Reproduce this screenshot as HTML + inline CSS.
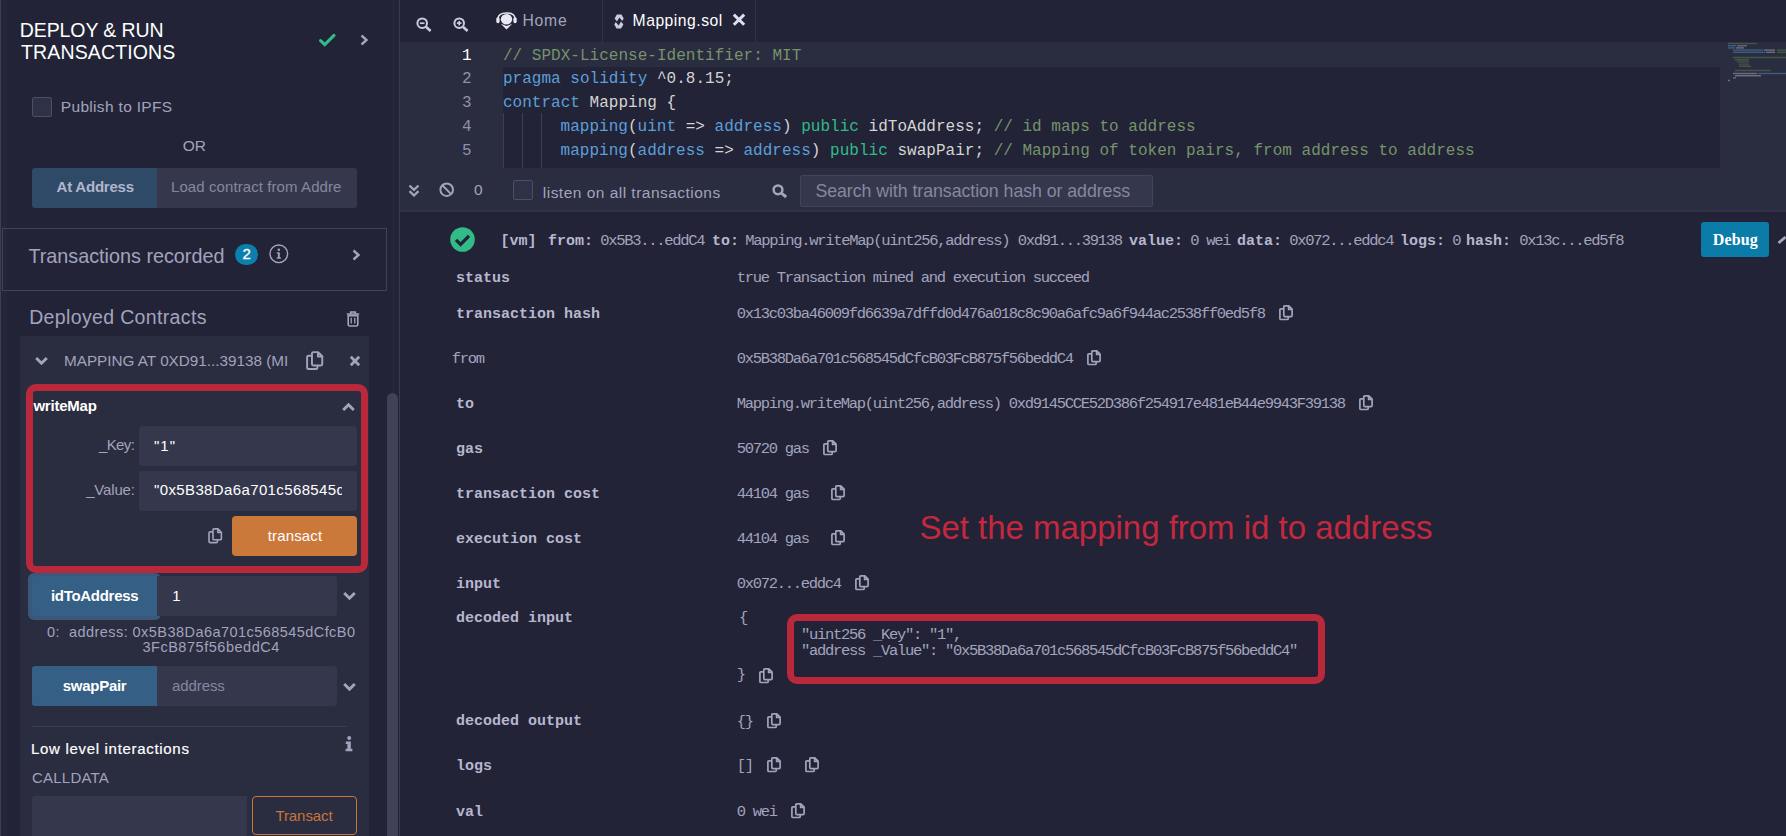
<!DOCTYPE html>
<html lang="en">
<head>
<meta charset="utf-8">
<title>Remix - Deploy &amp; Run Transactions</title>
<style>
*{box-sizing:border-box;margin:0;padding:0}
html,body{width:1786px;height:836px;overflow:hidden;background:#222336}
body{position:relative;font-family:"Liberation Sans",sans-serif;color:#a2a3bd;font-size:15px}
.a{position:absolute}
.t{position:absolute;white-space:nowrap}
.code{font-family:"Liberation Mono",monospace;font-size:16px;line-height:24px;white-space:pre;letter-spacing:0.020px}
.tb{font-family:"Liberation Mono",monospace;font-weight:bold;font-size:15px;line-height:20px;color:#b6b7ce;letter-spacing:-0.002px;white-space:pre}
.tv{font-family:"Liberation Mono",monospace;font-size:15.5px;line-height:20px;color:#a2a3bd;letter-spacing:-1.302px;white-space:pre}
svg{position:absolute;overflow:visible}
</style>
</head>
<body>
<!-- ================= SIDE PANEL ================= -->
<div class="a" style="left:0;top:0;width:1px;height:836px;background:#3d3f56"></div>
<div class="a" style="left:1px;top:0;width:5.500px;height:836px;background:#25263b"></div>

<svg style="left:318px;top:32px" width="18" height="16" viewBox="0 0 18 16"><path d="M2.600 8.600 L6.800 12.600 L16 3.400" fill="none" stroke="#32ba89" stroke-width="3.200" stroke-linecap="round"/></svg>
<svg style="left:359px;top:34px" width="10" height="12" viewBox="0 0 10 12"><path d="M2.500 1.500 L7.500 6 L2.500 10.500" fill="none" stroke="#a2a3bd" stroke-width="2.400"/></svg>

<div class="a" style="left:32px;top:97px;width:20px;height:20px;background:#2f3147;border:1px solid #4c4f66;border-radius:2px"></div>

<div class="a" style="left:32px;top:168px;width:125px;height:40px;background:#2e4a67;border-radius:3px 0 0 3px"></div>
<div class="a" style="left:157px;top:168px;width:200px;height:40px;background:#35384c;border-radius:0 3px 3px 0"></div>

<div class="a" style="left:2px;top:228px;width:385px;height:63px;border:1px solid #40435a"></div>
<div class="a" style="left:235px;top:244px;width:23px;height:21px;border-radius:10.5px;background:#0d7fac"></div>
<svg style="left:269px;top:244px" width="20" height="20" viewBox="0 0 20 20"><circle cx="9.800" cy="9.800" r="8.800" fill="none" stroke="#a2a3bd" stroke-width="1.400"/><rect x="8.900" y="8.400" width="1.900" height="6" fill="#a2a3bd"/><rect x="7.700" y="8.400" width="2.200" height="1.200" fill="#a2a3bd"/><rect x="7.500" y="13.400" width="4.600" height="1.200" fill="#a2a3bd"/><circle cx="9.800" cy="5.700" r="1.250" fill="#a2a3bd"/></svg>
<svg style="left:351.100px;top:249.200px" width="10" height="12" viewBox="0 0 10 12"><path d="M2.500 1.500 L7.500 6 L2.500 10.500" fill="none" stroke="#a2a3bd" stroke-width="2.400"/></svg>

<svg style="left:346.400px;top:310.800px" width="14" height="16" viewBox="0 0 14 16"><path d="M0.800 3 H13.200 M4.700 2.800 V1 H9.300 V2.800" fill="none" stroke="#a2a3bd" stroke-width="1.600"/><path d="M2.200 4.600 H11.800 V13.400 Q11.800 15 10.200 15 H3.800 Q2.200 15 2.200 13.400 Z" fill="none" stroke="#a2a3bd" stroke-width="1.600"/><path d="M5.200 6.800 V12.600 M8.800 6.800 V12.600" stroke="#a2a3bd" stroke-width="1.300"/></svg>

<!-- instance -->
<div class="a" style="left:20px;top:336px;width:349px;height:500px;background:#2a2c3f"></div>
<svg style="left:35.400px;top:356px" width="13" height="10" viewBox="0 0 13 10"><path d="M1.200 2 L6.500 7.200 L11.800 2" fill="none" stroke="#a2a3bd" stroke-width="3"/></svg>
<svg style="left:305.6px;top:351.4px" width="17.4" height="19.2" viewBox="0 0 14 15.400"><path d="M4.800 3.600 V2 Q4.800 0.900 5.900 0.900 H9.800 L13.100 4.200 V10.500 Q13.100 11.600 12 11.600 H5.900 Q4.800 11.600 4.800 10.500 Z M9.600 1.100 V4.400 H12.900" fill="none" stroke="#a2a3bd" stroke-width="1.55" stroke-linejoin="round"/><path d="M4.600 3.800 H2 Q0.900 3.800 0.900 4.900 V13.400 Q0.900 14.500 2 14.500 H8.100 Q9.200 14.500 9.200 13.400 V11.800" fill="none" stroke="#a2a3bd" stroke-width="1.55"/></svg>
<svg style="left:348.500px;top:355.200px" width="12" height="12" viewBox="0 0 12 12"><path d="M1.800 1.800 L10.200 10.200 M10.200 1.800 L1.800 10.200" stroke="#a2a3bd" stroke-width="2.800"/></svg>

<svg style="left:342px;top:402px" width="13" height="10" viewBox="0 0 13 10"><path d="M1.200 8 L6.500 2.800 L11.800 8" fill="none" stroke="#a2a3bd" stroke-width="3"/></svg>

<div class="a" style="left:139px;top:426px;width:218px;height:40px;background:#35384c;border-radius:3px"></div>
<div class="a" style="left:139px;top:471px;width:218px;height:40px;background:#35384c;border-radius:3px"></div>
<svg style="left:207.8px;top:528.2px" width="14.4" height="15.6" viewBox="0 0 14 15.400"><path d="M4.800 3.600 V2 Q4.800 0.900 5.900 0.900 H9.800 L13.100 4.200 V10.500 Q13.100 11.600 12 11.600 H5.900 Q4.800 11.600 4.800 10.500 Z M9.600 1.100 V4.400 H12.900" fill="none" stroke="#a2a3bd" stroke-width="1.6" stroke-linejoin="round"/><path d="M4.600 3.800 H2 Q0.900 3.800 0.900 4.900 V13.400 Q0.900 14.500 2 14.500 H8.100 Q9.200 14.500 9.200 13.400 V11.800" fill="none" stroke="#a2a3bd" stroke-width="1.6"/></svg>
<div class="a" style="left:232px;top:516px;width:125px;height:40px;background:#cb793b;border-radius:4px"></div>

<div class="a" style="left:28px;top:573px;width:133px;height:47px;background:#39587a;border-radius:6px"></div>
<div class="a" style="left:32px;top:576px;width:125px;height:40px;background:#355f85;border-radius:3px 0 0 3px"></div>
<div class="a" style="left:157px;top:576px;width:180px;height:40px;background:#35384c;border-radius:0 3px 3px 0"></div>
<svg style="left:343.400px;top:591.200px" width="13" height="10" viewBox="0 0 13 10"><path d="M1.200 2 L6.500 7.200 L11.800 2" fill="none" stroke="#a2a3bd" stroke-width="3"/></svg>

<div class="a" style="left:32px;top:666px;width:125px;height:40px;background:#355f85;border-radius:3px 0 0 3px"></div>
<div class="a" style="left:157px;top:666px;width:180px;height:40px;background:#35384c;border-radius:0 3px 3px 0"></div>
<svg style="left:343.400px;top:681.600px" width="13" height="10" viewBox="0 0 13 10"><path d="M1.200 2 L6.500 7.200 L11.800 2" fill="none" stroke="#a2a3bd" stroke-width="3"/></svg>

<div class="a" style="left:32px;top:726px;width:315px;height:1px;background:#393c52"></div>
<svg style="left:344.500px;top:736.400px" width="8" height="15.500" viewBox="0 0 8 15.500"><circle cx="4.200" cy="2" r="2" fill="#a2a3bd"/><path d="M0.800 5.600 H5.800 V12.800 H7.400 V15.300 H0.600 V12.800 H2.400 V8 H0.800 Z" fill="#a2a3bd"/></svg>
<div class="a" style="left:32px;top:796px;width:215px;height:40px;background:#35384c;border-radius:3px 0 0 0"></div>
<div class="a" style="left:252px;top:796px;width:105px;height:39px;border:1px solid #c97539;border-radius:4px"></div>

<!-- scrollbar + drag bar -->
<div class="a" style="left:393px;top:0;width:1px;height:394px;background:#2b2d42"></div>
<div class="a" style="left:386.500px;top:393px;width:11px;height:450px;background:#404258;border-radius:5.500px"></div>
<div class="a" style="left:399px;top:0;width:1px;height:836px;background:#393b52"></div>

<!-- ================= MAIN PANEL ================= -->
<!-- tab bar -->
<svg style="left:415.500px;top:17px" width="16" height="15" viewBox="0 0 16 15"><circle cx="6.200" cy="6.200" r="4.800" fill="none" stroke="#c9cbe0" stroke-width="2"/><path d="M9.900 9.700 L14.600 14" stroke="#c9cbe0" stroke-width="2.600"/><path d="M3.900 6.200 H8.500" stroke="#c9cbe0" stroke-width="1.700"/></svg>
<svg style="left:452.800px;top:17px" width="16" height="15" viewBox="0 0 16 15"><circle cx="6.200" cy="6.200" r="4.800" fill="none" stroke="#c9cbe0" stroke-width="2"/><path d="M9.900 9.700 L14.600 14" stroke="#c9cbe0" stroke-width="2.600"/><path d="M3.900 6.200 H8.500 M6.200 3.900 V8.500" stroke="#c9cbe0" stroke-width="1.700"/></svg>
<svg style="left:495.600px;top:12px" width="21" height="18" viewBox="0 0 21 18"><path d="M2 9 V7 Q2 1 10.500 1 Q19 1 19 7 V9" fill="none" stroke="#e8e9f3" stroke-width="1.500"/><rect x="0.300" y="5.200" width="3.300" height="6" rx="1.600" fill="#e8e9f3"/><rect x="17.400" y="5.200" width="3.300" height="6" rx="1.600" fill="#e8e9f3"/><ellipse cx="10.500" cy="7.300" rx="5.700" ry="5.300" fill="#e8e9f3"/><path d="M4.800 11.800 L10.500 17.600 L16.200 11.800 L10.500 14 Z" fill="#e8e9f3"/></svg>
<div class="a" style="left:602px;top:0;width:1px;height:42px;background:#303247"></div>
<div class="a" style="left:755px;top:0;width:1px;height:42px;background:#303247"></div>
<svg style="left:614px;top:13.800px" width="10" height="15" viewBox="0 0 10 15"><path d="M0.600 4.600 L2.900 0.600 H7.500 L9.700 4.400 L8.300 6.900 L5.300 3.500 L3 7.600 Z M9.400 10.400 L7.100 14.400 H2.500 L0.300 10.600 L1.700 8.100 L4.700 11.500 L7 7.400 Z" fill="#c9cbe0"/></svg>
<svg style="left:731.500px;top:13px" width="14" height="13.400" viewBox="0 0 14 13.400"><path d="M1.800 1.600 L12.200 11.800 M12.200 1.600 L1.800 11.800" stroke="#dcdded" stroke-width="3"/></svg>

<!-- editor -->
<div class="a" style="left:400px;top:42px;width:1386px;height:126px;background:#2a2c3f"></div>
<div class="a" style="left:503px;top:67px;width:1217px;height:101px;background:#222336"></div>
<div class="a" style="left:503px;top:113px;width:1px;height:55px;background:#3c3f54"></div>
<div class="a" style="left:522px;top:113px;width:1px;height:55px;background:#3c3f54"></div>
<div class="a" style="left:541px;top:113px;width:1px;height:55px;background:#3c3f54"></div>
<!-- minimap -->
<svg style="left:1727px;top:42px" width="59" height="42" viewBox="0 0 59 42"><g stroke-width="1.400" fill="none" opacity="0.600"><path d="M1 1.500 H30" stroke="#55734a"/><path d="M1 3.700 H9" stroke="#4b7fae"/><path d="M10 3.700 H20" stroke="#8f91a8"/><path d="M1 5.900 H8" stroke="#4b7fae"/><path d="M9 5.900 H17" stroke="#9c9eb5"/><path d="M6 8.100 H36" stroke="#4b7fae"/><path d="M37 8.100 H48" stroke="#9c9eb5"/><path d="M50 8.100 H59" stroke="#55734a"/><path d="M6 10.300 H38" stroke="#4b7fae"/><path d="M39 10.300 H48" stroke="#9c9eb5"/><path d="M50 10.300 H59" stroke="#55734a"/><path d="M6 15.500 H59" stroke="#55734a"/><path d="M8 17.700 H22 M10 19.900 H22 M12 22.100 H22 M12 24.300 H24" stroke="#55734a"/><path d="M8 28.500 H44" stroke="#55734a"/><path d="M6 31.500 H30" stroke="#9c9eb5"/><path d="M31 31.500 H59" stroke="#4b7fae"/><path d="M8 33.700 H34" stroke="#9c9eb5"/><path d="M6 35.900 H9 M1 38.500 H3" stroke="#9c9eb5"/></g></svg>

<!-- terminal toolbar -->
<div class="a" style="left:400px;top:168px;width:1386px;height:41px;background:#2a2c3f"></div>
<div class="a" style="left:400px;top:209px;width:1386px;height:3px;background:#2e3046"></div>
<svg style="left:408.400px;top:183.600px" width="12" height="13" viewBox="0 0 12 13"><path d="M1.500 1.500 L6 5.800 L10.500 1.500 M1.500 7.200 L6 11.500 L10.500 7.200" fill="none" stroke="#a2a3bd" stroke-width="2.300"/></svg>
<svg style="left:439px;top:181.600px" width="15.400" height="15.400" viewBox="0 0 15.400 15.400"><circle cx="7.700" cy="7.700" r="6.300" fill="none" stroke="#a2a3bd" stroke-width="2"/><path d="M3.300 3.300 L12.100 12.100" stroke="#a2a3bd" stroke-width="2"/></svg>
<div class="a" style="left:513px;top:180px;width:20px;height:20px;background:#2f3147;border:1px solid #4c4f66;border-radius:2px"></div>
<svg style="left:771.600px;top:183.600px" width="16" height="14.400" viewBox="0 0 16 14.400"><circle cx="6" cy="5.800" r="4.400" fill="none" stroke="#a2a3bd" stroke-width="2.500"/><path d="M9.400 9.200 L14.200 13" stroke="#a2a3bd" stroke-width="3"/></svg>
<div class="a" style="left:800px;top:175px;width:353px;height:32px;background:#35384c;border:1px solid #41445b;border-radius:2px"></div>

<!-- terminal -->
<svg style="left:449.500px;top:227px" width="25" height="25" viewBox="0 0 25 25"><circle cx="12.500" cy="12.500" r="12.300" fill="#32ba89"/><path d="M6 12.800 L10.600 17.400 L19 8.800" fill="none" stroke="#222336" stroke-width="3.200"/></svg>
<div class="a" style="left:1701px;top:222px;width:68px;height:35px;background:#0b7ba8;border-radius:3px"></div>
<svg style="left:1776px;top:236px" width="10" height="10" viewBox="0 0 10 10"><path d="M9.500 1 L2.500 7" stroke="#a2a3bd" stroke-width="2.800"/></svg>
<svg style="left:1279.0px;top:304.7px" width="14" height="15.4" viewBox="0 0 14 15.400"><path d="M4.800 3.600 V2 Q4.800 0.900 5.900 0.900 H9.800 L13.100 4.200 V10.500 Q13.100 11.600 12 11.600 H5.900 Q4.800 11.600 4.800 10.500 Z M9.600 1.100 V4.400 H12.900" fill="none" stroke="#a2a3bd" stroke-width="1.7" stroke-linejoin="round"/><path d="M4.600 3.800 H2 Q0.900 3.800 0.900 4.900 V13.400 Q0.900 14.500 2 14.500 H8.100 Q9.200 14.500 9.200 13.400 V11.800" fill="none" stroke="#a2a3bd" stroke-width="1.7"/></svg>
<svg style="left:1087.0px;top:349.7px" width="14" height="15.4" viewBox="0 0 14 15.400"><path d="M4.800 3.600 V2 Q4.800 0.900 5.900 0.900 H9.800 L13.100 4.200 V10.500 Q13.100 11.600 12 11.600 H5.900 Q4.800 11.600 4.800 10.500 Z M9.600 1.100 V4.400 H12.900" fill="none" stroke="#a2a3bd" stroke-width="1.7" stroke-linejoin="round"/><path d="M4.600 3.800 H2 Q0.900 3.800 0.900 4.900 V13.400 Q0.900 14.500 2 14.500 H8.100 Q9.200 14.500 9.200 13.400 V11.800" fill="none" stroke="#a2a3bd" stroke-width="1.7"/></svg>
<svg style="left:1359.0px;top:394.7px" width="14" height="15.4" viewBox="0 0 14 15.400"><path d="M4.800 3.600 V2 Q4.800 0.900 5.900 0.900 H9.800 L13.100 4.200 V10.500 Q13.100 11.600 12 11.600 H5.900 Q4.800 11.600 4.800 10.500 Z M9.600 1.100 V4.400 H12.900" fill="none" stroke="#a2a3bd" stroke-width="1.7" stroke-linejoin="round"/><path d="M4.600 3.800 H2 Q0.900 3.800 0.900 4.900 V13.400 Q0.900 14.500 2 14.500 H8.100 Q9.200 14.500 9.200 13.400 V11.800" fill="none" stroke="#a2a3bd" stroke-width="1.7"/></svg>
<svg style="left:823.0px;top:439.7px" width="14" height="15.4" viewBox="0 0 14 15.400"><path d="M4.800 3.600 V2 Q4.800 0.900 5.900 0.900 H9.800 L13.100 4.200 V10.500 Q13.100 11.600 12 11.600 H5.900 Q4.800 11.600 4.800 10.500 Z M9.600 1.100 V4.400 H12.900" fill="none" stroke="#a2a3bd" stroke-width="1.7" stroke-linejoin="round"/><path d="M4.600 3.800 H2 Q0.900 3.800 0.900 4.900 V13.400 Q0.900 14.500 2 14.500 H8.100 Q9.200 14.500 9.200 13.400 V11.800" fill="none" stroke="#a2a3bd" stroke-width="1.7"/></svg>
<svg style="left:831.0px;top:484.7px" width="14" height="15.4" viewBox="0 0 14 15.400"><path d="M4.800 3.600 V2 Q4.800 0.900 5.900 0.900 H9.800 L13.100 4.200 V10.500 Q13.100 11.600 12 11.600 H5.900 Q4.800 11.600 4.800 10.500 Z M9.600 1.100 V4.400 H12.900" fill="none" stroke="#a2a3bd" stroke-width="1.7" stroke-linejoin="round"/><path d="M4.600 3.800 H2 Q0.900 3.800 0.900 4.900 V13.400 Q0.900 14.500 2 14.500 H8.100 Q9.200 14.500 9.200 13.400 V11.800" fill="none" stroke="#a2a3bd" stroke-width="1.7"/></svg>
<svg style="left:831.0px;top:529.7px" width="14" height="15.4" viewBox="0 0 14 15.400"><path d="M4.800 3.600 V2 Q4.800 0.900 5.900 0.900 H9.800 L13.100 4.200 V10.500 Q13.100 11.600 12 11.600 H5.900 Q4.800 11.600 4.800 10.500 Z M9.600 1.100 V4.400 H12.900" fill="none" stroke="#a2a3bd" stroke-width="1.7" stroke-linejoin="round"/><path d="M4.600 3.800 H2 Q0.900 3.800 0.900 4.900 V13.400 Q0.900 14.500 2 14.500 H8.100 Q9.200 14.500 9.200 13.400 V11.800" fill="none" stroke="#a2a3bd" stroke-width="1.7"/></svg>
<svg style="left:855.0px;top:574.7px" width="14" height="15.4" viewBox="0 0 14 15.400"><path d="M4.800 3.600 V2 Q4.800 0.900 5.900 0.900 H9.800 L13.100 4.200 V10.500 Q13.100 11.600 12 11.600 H5.900 Q4.800 11.600 4.800 10.500 Z M9.600 1.100 V4.400 H12.900" fill="none" stroke="#a2a3bd" stroke-width="1.7" stroke-linejoin="round"/><path d="M4.600 3.800 H2 Q0.900 3.800 0.900 4.900 V13.400 Q0.900 14.500 2 14.500 H8.100 Q9.200 14.500 9.200 13.400 V11.800" fill="none" stroke="#a2a3bd" stroke-width="1.7"/></svg>
<svg style="left:767.3px;top:712.5px" width="14" height="15.4" viewBox="0 0 14 15.400"><path d="M4.800 3.600 V2 Q4.800 0.900 5.900 0.900 H9.800 L13.100 4.200 V10.500 Q13.100 11.600 12 11.600 H5.900 Q4.800 11.600 4.800 10.500 Z M9.600 1.100 V4.400 H12.900" fill="none" stroke="#a2a3bd" stroke-width="1.7" stroke-linejoin="round"/><path d="M4.600 3.800 H2 Q0.900 3.800 0.900 4.900 V13.400 Q0.900 14.500 2 14.500 H8.100 Q9.200 14.500 9.200 13.400 V11.800" fill="none" stroke="#a2a3bd" stroke-width="1.7"/></svg>
<svg style="left:767.3px;top:757.3px" width="14" height="15.4" viewBox="0 0 14 15.400"><path d="M4.800 3.600 V2 Q4.800 0.900 5.900 0.900 H9.800 L13.100 4.200 V10.500 Q13.100 11.600 12 11.600 H5.900 Q4.800 11.600 4.800 10.500 Z M9.600 1.100 V4.400 H12.900" fill="none" stroke="#a2a3bd" stroke-width="1.7" stroke-linejoin="round"/><path d="M4.600 3.800 H2 Q0.900 3.800 0.900 4.900 V13.400 Q0.900 14.500 2 14.500 H8.100 Q9.200 14.500 9.200 13.400 V11.800" fill="none" stroke="#a2a3bd" stroke-width="1.7"/></svg>
<svg style="left:791.1px;top:802.6px" width="14" height="15.4" viewBox="0 0 14 15.400"><path d="M4.800 3.600 V2 Q4.800 0.900 5.900 0.900 H9.800 L13.100 4.200 V10.500 Q13.100 11.600 12 11.600 H5.900 Q4.800 11.600 4.800 10.500 Z M9.600 1.100 V4.400 H12.900" fill="none" stroke="#a2a3bd" stroke-width="1.7" stroke-linejoin="round"/><path d="M4.600 3.800 H2 Q0.900 3.800 0.900 4.900 V13.400 Q0.900 14.500 2 14.500 H8.100 Q9.200 14.500 9.200 13.400 V11.800" fill="none" stroke="#a2a3bd" stroke-width="1.7"/></svg>
<svg style="left:805.3px;top:757.3px" width="14" height="15.4" viewBox="0 0 14 15.400"><path d="M4.800 3.600 V2 Q4.800 0.900 5.900 0.900 H9.800 L13.100 4.200 V10.500 Q13.100 11.600 12 11.600 H5.900 Q4.800 11.600 4.800 10.500 Z M9.600 1.100 V4.400 H12.900" fill="none" stroke="#a2a3bd" stroke-width="1.7" stroke-linejoin="round"/><path d="M4.600 3.800 H2 Q0.900 3.800 0.900 4.900 V13.400 Q0.900 14.500 2 14.500 H8.100 Q9.200 14.500 9.200 13.400 V11.800" fill="none" stroke="#a2a3bd" stroke-width="1.7"/></svg>
<svg style="left:759.0px;top:667.5px" width="14" height="15.4" viewBox="0 0 14 15.400"><path d="M4.800 3.600 V2 Q4.800 0.900 5.900 0.900 H9.800 L13.100 4.200 V10.500 Q13.100 11.600 12 11.600 H5.900 Q4.800 11.600 4.800 10.500 Z M9.600 1.100 V4.400 H12.900" fill="none" stroke="#a2a3bd" stroke-width="1.7" stroke-linejoin="round"/><path d="M4.600 3.800 H2 Q0.900 3.800 0.900 4.900 V13.400 Q0.900 14.500 2 14.500 H8.100 Q9.200 14.500 9.200 13.400 V11.800" fill="none" stroke="#a2a3bd" stroke-width="1.7"/></svg>

<!-- ================= TEXT ================= -->
<div class="a" style="left:0;top:465px;width:341.500px;height:50px;overflow:hidden"><div class="a" style="left:0;top:-465px;width:400px;height:836px"><div class="t" id="valv" style="left:154.00px;top:480.00px;font-size:15px;line-height:20px;color:#ffffff;letter-spacing:0.375px;">&quot;0x5B38Da6a701c568545dCfcB03FcB875f56beddC4&quot;</div></div></div>
<div class="t" id="h1" style="left:19.80px;top:17.74px;font-size:19.5px;line-height:25px;color:#ffffff;letter-spacing:-0.091px;">DEPLOY &amp; RUN</div>
<div class="t" id="h2" style="left:21.00px;top:39.94px;font-size:19.5px;line-height:25px;color:#ffffff;letter-spacing:0.136px;">TRANSACTIONS</div>
<div class="t" id="pub" style="left:60.80px;top:96.63px;font-size:15.5px;line-height:20px;color:#a2a3bd;letter-spacing:0.321px;">Publish to IPFS</div>
<div class="t" id="or" style="left:182.80px;top:135.63px;font-size:15.5px;line-height:20px;color:#a2a3bd;">OR</div>
<div class="t" id="ataddr" style="left:56.60px;top:176.80px;font-size:15px;line-height:20px;color:#b3b5cb;font-weight:bold;letter-spacing:-0.222px;">At Address</div>
<div class="t" id="load" style="left:171.00px;top:177.30px;font-size:15px;line-height:20px;color:#8587a1;letter-spacing:0.087px;">Load contract from Addre</div>
<div class="t" id="txrec" style="left:28.40px;top:243.14px;font-size:19.8px;line-height:26px;color:#a2a3bd;">Transactions recorded</div>
<div class="t" id="badge" style="left:242.40px;top:243.80px;font-size:15px;line-height:20px;color:#ffffff;-webkit-text-stroke:0.3px #fff;">2</div>
<div class="t" id="depl" style="left:29.20px;top:305.44px;font-size:19.5px;line-height:25px;color:#a2a3bd;letter-spacing:0.353px;">Deployed Contracts</div>
<div class="t" id="inst" style="left:64.00px;top:350.80px;font-size:15.3px;line-height:20px;color:#a2a3bd;letter-spacing:-0.019px;">MAPPING AT 0XD91...39138 (MI</div>
<div class="t" id="wm" style="left:33.40px;top:395.70px;font-size:15px;line-height:20px;color:#ffffff;font-weight:bold;letter-spacing:-0.214px;">writeMap</div>
<div class="t" id="key" style="left:99.00px;top:435.40px;font-size:15px;line-height:20px;color:#a2a3bd;letter-spacing:-0.625px;">_Key:</div>
<div class="t" id="keyv" style="left:154.00px;top:435.80px;font-size:15px;line-height:20px;color:#ffffff;letter-spacing:1.000px;">&quot;1&quot;</div>
<div class="t" id="value" style="left:86.20px;top:480.00px;font-size:15px;line-height:20px;color:#a2a3bd;letter-spacing:-0.167px;">_Value:</div>
<div class="t" id="transact" style="left:267.80px;top:525.50px;font-size:15px;line-height:20px;color:#ffffff;letter-spacing:0.143px;">transact</div>
<div class="t" id="id2a" style="left:51.00px;top:585.60px;font-size:15px;line-height:20px;color:#ffffff;font-weight:bold;letter-spacing:-0.300px;">idToAddress</div>
<div class="t" id="one" style="left:172.35px;top:585.60px;font-size:15px;line-height:20px;color:#ffffff;">1</div>
<div class="t" id="res1" style="left:47.00px;top:623.28px;font-size:14.5px;line-height:19px;color:#a2a3bd;letter-spacing:0.447px;">0:&nbsp; address: 0x5B38Da6a701c568545dCfcB0</div>
<div class="t" id="res2" style="left:142.40px;top:638.48px;font-size:14.5px;line-height:19px;color:#a2a3bd;letter-spacing:0.533px;">3FcB875f56beddC4</div>
<div class="t" id="swp" style="left:62.80px;top:675.70px;font-size:15px;line-height:20px;color:#ffffff;font-weight:bold;letter-spacing:-0.286px;">swapPair</div>
<div class="t" id="addrph" style="left:172.00px;top:675.70px;font-size:15px;line-height:20px;color:#8587a1;letter-spacing:-0.083px;">address</div>
<div class="t" id="lli" style="left:31.00px;top:738.90px;font-size:15px;line-height:20px;color:#ffffff;letter-spacing:0.690px;-webkit-text-stroke:0.2px #fff;">Low level interactions</div>
<div class="t" id="calld" style="left:32.00px;top:768.30px;font-size:15px;line-height:20px;color:#a2a3bd;letter-spacing:0.214px;">CALLDATA</div>
<div class="t" id="Transact" style="left:275.40px;top:805.70px;font-size:15px;line-height:20px;color:#c97539;letter-spacing:-0.071px;">Transact</div>
<div class="t" id="home" style="left:522.40px;top:10.76px;font-size:15.7px;line-height:20px;color:#a2a3bd;letter-spacing:0.833px;">Home</div>
<div class="t" id="mapsol" style="left:632.60px;top:10.76px;font-size:15.7px;line-height:20px;color:#ffffff;letter-spacing:0.500px;">Mapping.sol</div>
<div class="t" id="zero" style="left:474.10px;top:179.83px;font-size:15.5px;line-height:20px;color:#a2a3bd;">0</div>
<div class="t" id="listen" style="left:542.80px;top:182.53px;font-size:15.5px;line-height:20px;color:#a2a3bd;letter-spacing:0.480px;">listen on all transactions</div>
<div class="t" id="search" style="left:815.40px;top:179.53px;font-size:17.8px;line-height:23px;color:#8587a1;letter-spacing:-0.066px;">Search with transaction hash or address</div>
<div class="t" id="debug" style="left:1712.80px;top:228.80px;font-size:16px;line-height:21px;color:#ffffff;font-family:'Liberation Serif',serif;font-weight:bold;letter-spacing:0.125px;">Debug</div>
<div class="t" id="redtxt" style="left:919.40px;top:505.97px;font-size:33px;line-height:43px;color:#c3283e;letter-spacing:-0.015px;">Set the mapping from id to address</div>
<div class="t code" id="c1" style="left:503.00px;top:43.63px;color:#d4d4d4;"><span style="color:#76936b">// SPDX-License-Identifier: MIT</span></div>
<div class="t code" id="n1" style="left:461.90px;top:43.63px;color:#ffffff;">1</div>
<div class="t code" id="c2" style="left:503.00px;top:67.38px;color:#d4d4d4;"><span style="color:#5b9fd9">pragma solidity</span> ^0.8.15;</div>
<div class="t code" id="n2" style="left:461.90px;top:67.38px;color:#8f91ab;">2</div>
<div class="t code" id="c3" style="left:503.00px;top:91.13px;color:#d4d4d4;"><span style="color:#5b9fd9">contract</span> Mapping {</div>
<div class="t code" id="n3" style="left:461.90px;top:91.13px;color:#8f91ab;">3</div>
<div class="t code" id="c4" style="left:560.60px;top:114.93px;color:#d4d4d4;"><span style="color:#5b9fd9">mapping</span>(<span style="color:#5b9fd9">uint</span> =&gt; <span style="color:#5b9fd9">address</span>) <span style="color:#32ba89">public</span> idToAddress; <span style="color:#76936b">// id maps to address</span></div>
<div class="t code" id="n4" style="left:461.90px;top:114.93px;color:#8f91ab;">4</div>
<div class="t code" id="c5" style="left:560.60px;top:138.73px;color:#d4d4d4;"><span style="color:#5b9fd9">mapping</span>(<span style="color:#5b9fd9">address</span> =&gt; <span style="color:#5b9fd9">address</span>) <span style="color:#32ba89">public</span> swapPair; <span style="color:#76936b">// Mapping of token pairs, from address to address</span></div>
<div class="t code" id="n5" style="left:461.90px;top:138.73px;color:#8f91ab;">5</div>
<div class="t tb" id="g0" style="left:500.50px;top:231.60px;">[vm]</div>
<div class="t tb" id="g1" style="left:548.00px;top:231.60px;">from:</div>
<div class="t tv" id="g2" style="left:600.30px;top:230.87px;">0x5B3...eddC4</div>
<div class="t tb" id="g3" style="left:712.00px;top:231.60px;">to:</div>
<div class="t tv" id="g4" style="left:745.30px;top:230.87px;">Mapping.writeMap(uint256,address)</div>
<div class="t tv" id="g5" style="left:1017.80px;top:230.87px;">0xd91...39138</div>
<div class="t tb" id="g6" style="left:1129.00px;top:231.60px;">value:</div>
<div class="t tv" id="g7" style="left:1190.30px;top:230.87px;">0 wei</div>
<div class="t tb" id="g8" style="left:1237.00px;top:231.60px;">data:</div>
<div class="t tv" id="g9" style="left:1289.30px;top:230.87px;">0x072...eddc4</div>
<div class="t tb" id="g10" style="left:1400.00px;top:231.60px;">logs:</div>
<div class="t tv" id="g11" style="left:1452.30px;top:230.87px;">0</div>
<div class="t tb" id="g12" style="left:1466.00px;top:231.60px;">hash:</div>
<div class="t tv" id="g13" style="left:1519.30px;top:230.87px;">0x13c...ed5f8</div>
<div class="t tb" id="l0" style="left:455.90px;top:268.60px;">status</div>
<div class="t tv" id="v0" style="left:736.70px;top:267.87px;">true Transaction mined and execution succeed</div>
<div class="t tb" id="l1" style="left:455.90px;top:304.60px;">transaction hash</div>
<div class="t tv" id="v1" style="left:736.70px;top:303.87px;">0x13c03ba46009fd6639a7dffd0d476a018c8c90a6afc9a6f944ac2538ff0ed5f8</div>
<div class="t tv" id="l2" style="left:451.80px;top:348.87px;">from</div>
<div class="t tv" id="v2" style="left:736.70px;top:348.87px;">0x5B38Da6a701c568545dCfcB03FcB875f56beddC4</div>
<div class="t tb" id="l3" style="left:455.90px;top:394.60px;">to</div>
<div class="t tv" id="v3" style="left:736.70px;top:393.87px;">Mapping.writeMap(uint256,address) 0xd9145CCE52D386f254917e481eB44e9943F39138</div>
<div class="t tb" id="l4" style="left:455.90px;top:439.60px;">gas</div>
<div class="t tv" id="v4" style="left:736.70px;top:438.87px;">50720 gas</div>
<div class="t tb" id="l5" style="left:455.90px;top:484.60px;">transaction cost</div>
<div class="t tv" id="v5" style="left:736.70px;top:483.87px;">44104 gas</div>
<div class="t tb" id="l6" style="left:455.90px;top:529.60px;">execution cost</div>
<div class="t tv" id="v6" style="left:736.70px;top:528.87px;">44104 gas</div>
<div class="t tb" id="l7" style="left:455.90px;top:574.60px;">input</div>
<div class="t tv" id="v7" style="left:736.70px;top:573.87px;">0x072...eddc4</div>
<div class="t tb" id="l8" style="left:455.90px;top:609.20px;">decoded input</div>
<div class="t tv" id="v8" style="left:738.90px;top:608.47px;">{</div>
<div class="t tb" id="l9" style="left:455.90px;top:712.40px;">decoded output</div>
<div class="t tv" id="v9" style="left:736.70px;top:711.67px;">{}</div>
<div class="t tb" id="l10" style="left:455.90px;top:757.20px;">logs</div>
<div class="t tv" id="v10" style="left:736.70px;top:756.47px;">[]</div>
<div class="t tb" id="l11" style="left:455.90px;top:802.50px;">val</div>
<div class="t tv" id="v11" style="left:736.70px;top:801.77px;">0 wei</div>
<div class="t tv" id="dj1" style="left:801.10px;top:624.87px;">&quot;uint256 _Key&quot;: &quot;1&quot;,</div>
<div class="t tv" id="dj2" style="left:801.10px;top:640.57px;">&quot;address _Value&quot;: &quot;0x5B38Da6a701c568545dCfcB03FcB875f56beddC4&quot;</div>
<div class="t tv" id="dj3" style="left:736.70px;top:664.87px;">}</div>

<!-- clip patch for value input overflow -->
<div class="a" style="left:341.500px;top:471px;width:15.500px;height:40px;background:#35384c;border-radius:0 3px 3px 0"></div>
<div class="a" style="left:357px;top:471px;width:5px;height:40px;background:#2a2c3f"></div>
<div class="a" style="left:341.500px;top:168px;width:15.500px;height:40px;background:#35384c;border-radius:0 3px 3px 0"></div>

<!-- red annotation boxes -->
<div class="a" style="left:26.400px;top:384px;width:341.600px;height:189px;border:7px solid #ba283c;border-radius:10px"></div>
<div class="a" style="left:787px;top:614.200px;width:538.200px;height:69.500px;border:7px solid #ba283c;border-radius:10px"></div>
</body>
</html>
